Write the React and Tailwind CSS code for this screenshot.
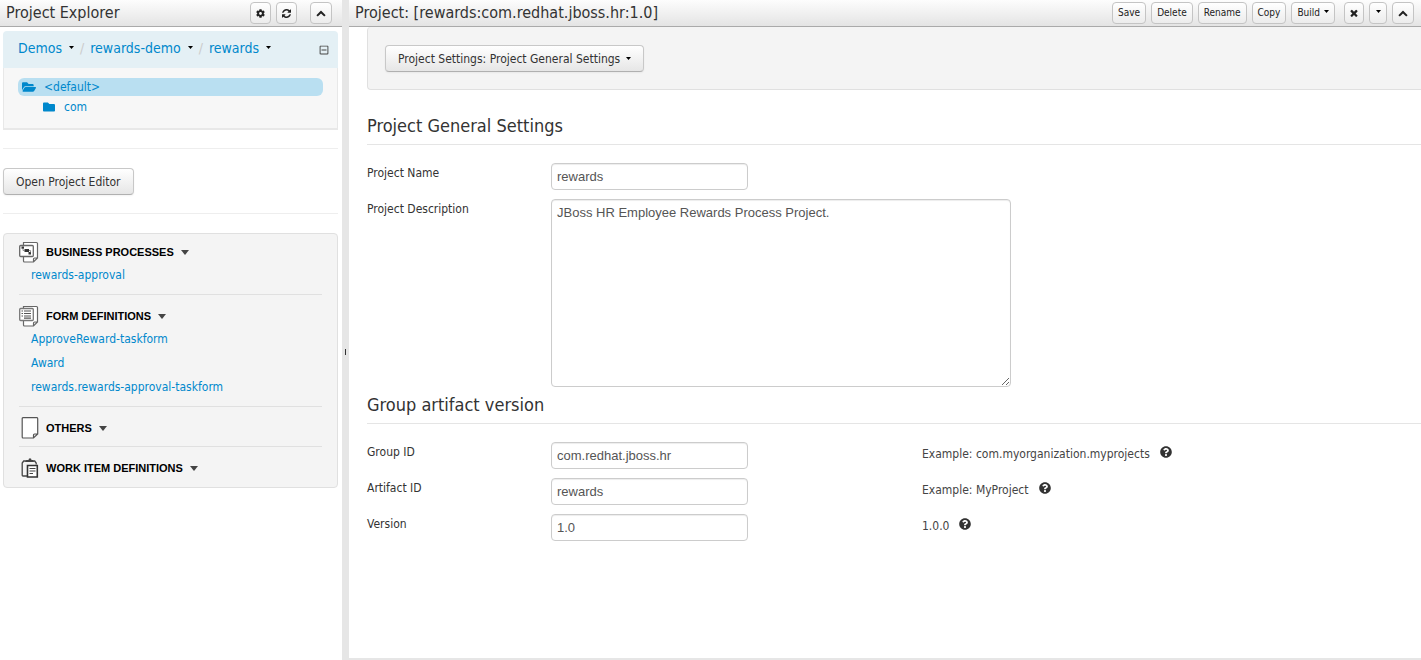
import React from "react";
import { FaCog, FaFolder, FaFolderOpen, FaQuestionCircle, FaRegMinusSquare } from "react-icons/fa";

const headerButton =
  "flex h-[22px] items-center justify-center rounded border border-[#c4c4c4] bg-linear-to-b from-white to-[#ececec] text-[10px] leading-4 text-[#222]";
const wideButton =
  "flex h-[27px] items-center rounded border border-[#c8c8c8] border-b-[#b0b0b0] bg-linear-to-b from-white to-[#e6e6e6] px-3 text-[12px] leading-4 text-[#333] shadow-xs";
const inputStyle =
  "block rounded border border-[#ccc] bg-white px-[5px] font-['Liberation_Sans',sans-serif] text-[13px] leading-[18px] text-[#555] shadow-[inset_0_1px_1px_rgba(0,0,0,0.075)]";

function Caret({ className = "" }) {
  return (
    <svg viewBox="0 0 5 3" className={`h-[3px] w-[5px] shrink-0 text-black ${className}`} aria-hidden="true">
      <path d="M0 0h5L2.5 3z" fill="currentColor" />
    </svg>
  );
}

function RefreshIcon() {
  return (
    <svg viewBox="0 128 1536 1536" className="size-[9px]" fill="currentColor" aria-hidden="true">
      <path d="M1511 1056q0 5-1 7-64 268-268 434.500t-478 166.500q-146 0-282.500-55t-243.500-157l-129 129q-19 19-45 19t-45-19-19-45v-448q0-26 19-45t45-19h448q26 0 45 19t19 45-19 45l-137 137q71 66 161 102t187 36q134 0 250-65t186-179q11-17 53-117 8-23 30-23h192q13 0 22.500 9.500t9.500 22.500zm25-800v448q0 26-19 45t-45 19h-448q-26 0-45-19t-19-45 19-45l138-138q-148-137-349-137-134 0-250 65t-186 179q-11 17-53 117-8 23-30 23h-199q-13 0-22.500-9.500t-9.500-22.500v-7q65-268 270-434.500t480-166.500q146 0 284 55.500t245 156.500l130-129q19-19 45-19t45 19 19 45z" />
    </svg>
  );
}

function ChevronUpIcon() {
  return (
    <svg viewBox="0 0 1792 1792" className="size-[10px]" fill="currentColor" aria-hidden="true">
      <path d="M1683 1331l-166 165q-19 19-45 19t-45-19l-531-531-531 531q-19 19-45 19t-45-19l-166-165q-19-19-19-45.500t19-45.500l742-741q19-19 45-19t45 19l742 741q19 19 19 45.500t-19 45.500z" />
    </svg>
  );
}

function CloseIcon() {
  return (
    <svg viewBox="224 224 1344 1344" className="size-[8px]" fill="currentColor" aria-hidden="true">
      <path d="M1490 1322q0 40-28 68l-136 136q-28 28-68 28t-68-28l-294-294-294 294q-28 28-68 28t-68-28l-136-136q-28-28-28-68t28-68l294-294-294-294q-28-28-28-68t28-68l136-136q28-28 68-28t68 28l294 294 294-294q28-28 68-28t68 28l136 136q28 28 28 68t-28 68l-294 294 294 294q28 28 28 68z" />
    </svg>
  );
}

function PageOutline() {
  return (
    <path
      d="M4.500 1.500h13q1 0 1 1v14.500l-4 4h-9q-1 0-1-1zM18.500 17h-3q-1 0-1 1v3"
      fill="#fff"
      stroke="#666"
      strokeWidth="1.200"
    />
  );
}

function ProcessIcon() {
  return (
    <svg viewBox="0 0 20 22" className="h-[22px] w-5" aria-hidden="true">
      <PageOutline />
      <rect x="0.700" y="4.500" width="13.600" height="11" rx="1" fill="#fff" stroke="#666" strokeWidth="1.300" />
      <path d="M2.500 5.500h2.500v2.200h-2.500zM5.500 8h4.500v3h-4.500zM9.500 11h2.500v2.500h-2.500z" fill="#333" />
      <path d="M4 8v1.500h2M10 9.500h1.500v2" fill="none" stroke="#777" strokeWidth="0.800" />
    </svg>
  );
}

function FormIcon() {
  return (
    <svg viewBox="0 0 20 22" className="h-[22px] w-5" aria-hidden="true">
      <PageOutline />
      <rect x="0.700" y="3.500" width="13.600" height="12" rx="1" fill="#fff" stroke="#777" strokeWidth="1.300" />
      <path d="M2.500 6h1.500M5 6h7M2.500 8.500h1.500M5 8.500h7M2.500 11h1.500M5 11h7M5 13.200h7" stroke="#555" strokeWidth="1.200" />
    </svg>
  );
}

function OtherIcon() {
  return (
    <svg viewBox="0 0 20 22" className="h-[22px] w-5" aria-hidden="true">
      <path
        d="M4 0.700h14q0.700 0 0.700 1v15.300l-4.200 4H4q-0.800 0-0.800-1V1.700q0-1 0.800-1zM18.500 17h-3q-1 0-1 1v3"
        fill="#fff"
        stroke="#555"
        strokeWidth="1.200"
      />
    </svg>
  );
}

function WorkItemIcon() {
  return (
    <svg viewBox="0 0 20 22" className="h-[22px] w-5" aria-hidden="true">
      <path d="M8 19H4q-0.800 0-0.800-0.800V6l1.500-2h11l1.500 2v1.500" fill="none" stroke="#444" strokeWidth="1.300" />
      <path d="M6 5 7.500 3h2q0-1.800 1.500-1.800t1.500 1.800h1.500l1 2z" fill="#444" />
      <path d="M8.500 8.500h9.800v11.500H8.500z" fill="#fff" stroke="#333" strokeWidth="1.600" />
      <path d="M10.500 11.500h6M10.500 14h6M10.500 16.500h3.500" stroke="#444" strokeWidth="1.200" />
    </svg>
  );
}

const groups = [
  { title: "BUSINESS PROCESSES", icon: ProcessIcon, items: ["rewards-approval"] },
  { title: "FORM DEFINITIONS", icon: FormIcon, items: ["ApproveReward-taskform", "Award", "rewards.rewards-approval-taskform"] },
  { title: "OTHERS", icon: OtherIcon, items: [] },
  { title: "WORK ITEM DEFINITIONS", icon: WorkItemIcon, items: [] },
];

function PanelHeader({ title, children }) {
  return (
    <header className="flex h-[27px] items-center justify-between border-b border-[#aaa] bg-linear-to-b from-[#fdfdfd] to-[#e4e4e4] pl-[6px]">
      <h1 className="text-[16px] leading-5 whitespace-nowrap text-[#333]">{title}</h1>
      <div className="flex items-center gap-[5px]">{children}</div>
    </header>
  );
}

function Crumb({ children }) {
  return (
    <li className="flex items-center gap-[7px]">
      <a href="#" className="text-[14px] leading-5 text-[#0088cc]">{children}</a>
      <Caret />
    </li>
  );
}

function ProjectExplorer() {
  return (
    <aside className="w-[342px] shrink-0">
      <PanelHeader title="Project Explorer">
        <button aria-label="Settings" className={`${headerButton} w-[21px]`}><FaCog size={9} /></button>
        <button aria-label="Refresh" className={`${headerButton} w-[21px]`}><RefreshIcon /></button>
        <button aria-label="Collapse" className={`${headerButton} mr-[10px] ml-2 w-[22px]`}><ChevronUpIcon /></button>
      </PanelHeader>

      <div className="mr-1 ml-[3px] pt-1">
        <nav aria-label="Project path" className="flex h-[37px] items-center justify-between rounded-t bg-[#e4f0f5] pr-[9px] pl-[15px]">
          <ol className="flex items-center gap-[6px] pb-1">
            <Crumb>Demos</Crumb>
            <li aria-hidden="true" className="text-[14px] leading-5 text-[#ccc]">/</li>
            <Crumb>rewards-demo</Crumb>
            <li aria-hidden="true" className="text-[14px] leading-5 text-[#ccc]">/</li>
            <Crumb>rewards</Crumb>
          </ol>
          <button aria-label="Collapse tree" className="text-[#444]"><FaRegMinusSquare size={10} /></button>
        </nav>
        <ul className="h-[62px] border border-t-0 border-b-2 border-[#e8e8e8] bg-[#f7f7f7] px-[14px] pt-[10px] text-[12px] text-[#0088cc]">
          <li className="flex h-[18px] items-center gap-2 rounded-md bg-[#b9dff1] pl-1">
            <FaFolderOpen size={14} />
            <a href="#">&lt;default&gt;</a>
          </li>
          <li className="flex h-[21px] items-center gap-[9px] pl-[25px]">
            <FaFolder size={12} />
            <a href="#">com</a>
          </li>
        </ul>

        <div className="mt-[18px] border-y border-[#eee] pt-[19px] pb-[18px]">
          <button className={wideButton}>Open Project Editor</button>
        </div>

        <div className="mt-[19px] rounded border border-[#e0e0e0] bg-[#f4f4f4] px-[15px]">
          {groups.map(({ title, icon: Icon, items }) => (
            <section key={title} className="border-b border-[#e0e0e0] pt-[10px] pb-[7px] first:pt-[7px] last:border-b-0 last:pb-2">
              <button className="flex items-center gap-[7px] font-['Liberation_Sans',sans-serif] text-[11px] leading-4 font-bold text-black">
                <Icon />
                {title}
                <svg viewBox="0 0 8 5" className="h-[5px] w-2" aria-hidden="true">
                  <path d="M0 0h8L4 5z" fill="#444" />
                </svg>
              </button>
              {items.length > 0 && (
                <ul className="pl-3 text-[12px] leading-6 text-[#0088cc]">
                  {items.map((item) => (
                    <li key={item}><a href="#">{item}</a></li>
                  ))}
                </ul>
              )}
            </section>
          ))}
        </div>
      </div>
    </aside>
  );
}

function SectionTitle({ children }) {
  return <h2 className="border-b border-[#e5e5e5] pb-[6px] text-[18px] leading-6 text-[#333]">{children}</h2>;
}

function Field({ id, label, value, help }) {
  return (
    <div className="grid grid-cols-[184px_371px_1fr] items-start">
      <label htmlFor={id} className="text-[12px] leading-5 text-[#333]">{label}</label>
      <input id={id} defaultValue={value} className={`${inputStyle} h-[27px] w-[197px]`} />
      {help && (
        <p className="flex items-center gap-[10px] pt-[2px] text-[12px] leading-5 text-[#444]">
          {help}
          <FaQuestionCircle size={12} className="mb-1 text-[#333]" />
        </p>
      )}
    </div>
  );
}

function ProjectEditor() {
  return (
    <main className="flex min-w-0 grow flex-col border-b-2 border-[#e6e6e6]">
      <PanelHeader title="Project: [rewards:com.redhat.jboss.hr:1.0]">
        <button className={`${headerButton} px-[5px]`}>Save</button>
        <button className={`${headerButton} px-[5px]`}>Delete</button>
        <button className={`${headerButton} px-[5px]`}>Rename</button>
        <button className={`${headerButton} px-[5px]`}>Copy</button>
        <button className={`${headerButton} gap-1 px-[5px]`}>Build<Caret className="mb-1" /></button>
        <button aria-label="Close" className={`${headerButton} ml-1 w-5`}><CloseIcon /></button>
        <button aria-label="More" className={`${headerButton} w-[18px]`}><Caret className="mb-1" /></button>
        <button aria-label="Maximize" className={`${headerButton} mr-[7px] w-[22px]`}><ChevronUpIcon /></button>
      </PanelHeader>

      <div className="pl-[18px]">
        <div className="rounded-l border-b border-l border-[#e0e0e0] bg-[#f4f4f4] px-[17px] pt-[18px] pb-[17px]">
          <button className={`${wideButton} gap-[6px]`}>
            Project Settings: Project General Settings
            <Caret />
          </button>
        </div>

        <section className="pt-6">
          <SectionTitle>Project General Settings</SectionTitle>
          <div className="flex flex-col gap-[9px] pt-[18px]">
            <Field id="project-name" label="Project Name" value="rewards" />
            <div className="flex items-start">
              <label htmlFor="project-description" className="w-[184px] shrink-0 text-[12px] leading-5 text-[#333]">
                Project Description
              </label>
              <textarea
                id="project-description"
                defaultValue="JBoss HR Employee Rewards Process Project."
                className={`${inputStyle} h-[188px] w-[460px] resize py-1`}
              />
            </div>
          </div>
        </section>

        <section className="pt-[6px]">
          <SectionTitle>Group artifact version</SectionTitle>
          <div className="flex flex-col gap-[9px] pt-[18px]">
            <Field id="group-id" label="Group ID" value="com.redhat.jboss.hr" help="Example: com.myorganization.myprojects" />
            <Field id="artifact-id" label="Artifact ID" value="rewards" help="Example: MyProject" />
            <Field id="version" label="Version" value="1.0" help="1.0.0" />
          </div>
        </section>
      </div>
    </main>
  );
}

export default function App() {
  return (
    <div className="flex min-h-screen bg-white font-['DejaVu_Sans_Condensed','DejaVu_Sans',sans-serif]">
      <ProjectExplorer />
      <div role="separator" aria-orientation="vertical" className="flex w-[7px] shrink-0 cursor-col-resize items-center justify-center bg-[#e6e6e6]">
        <span className="mt-11 h-[6px] w-px bg-[#333]" />
      </div>
      <ProjectEditor />
    </div>
  );
}
